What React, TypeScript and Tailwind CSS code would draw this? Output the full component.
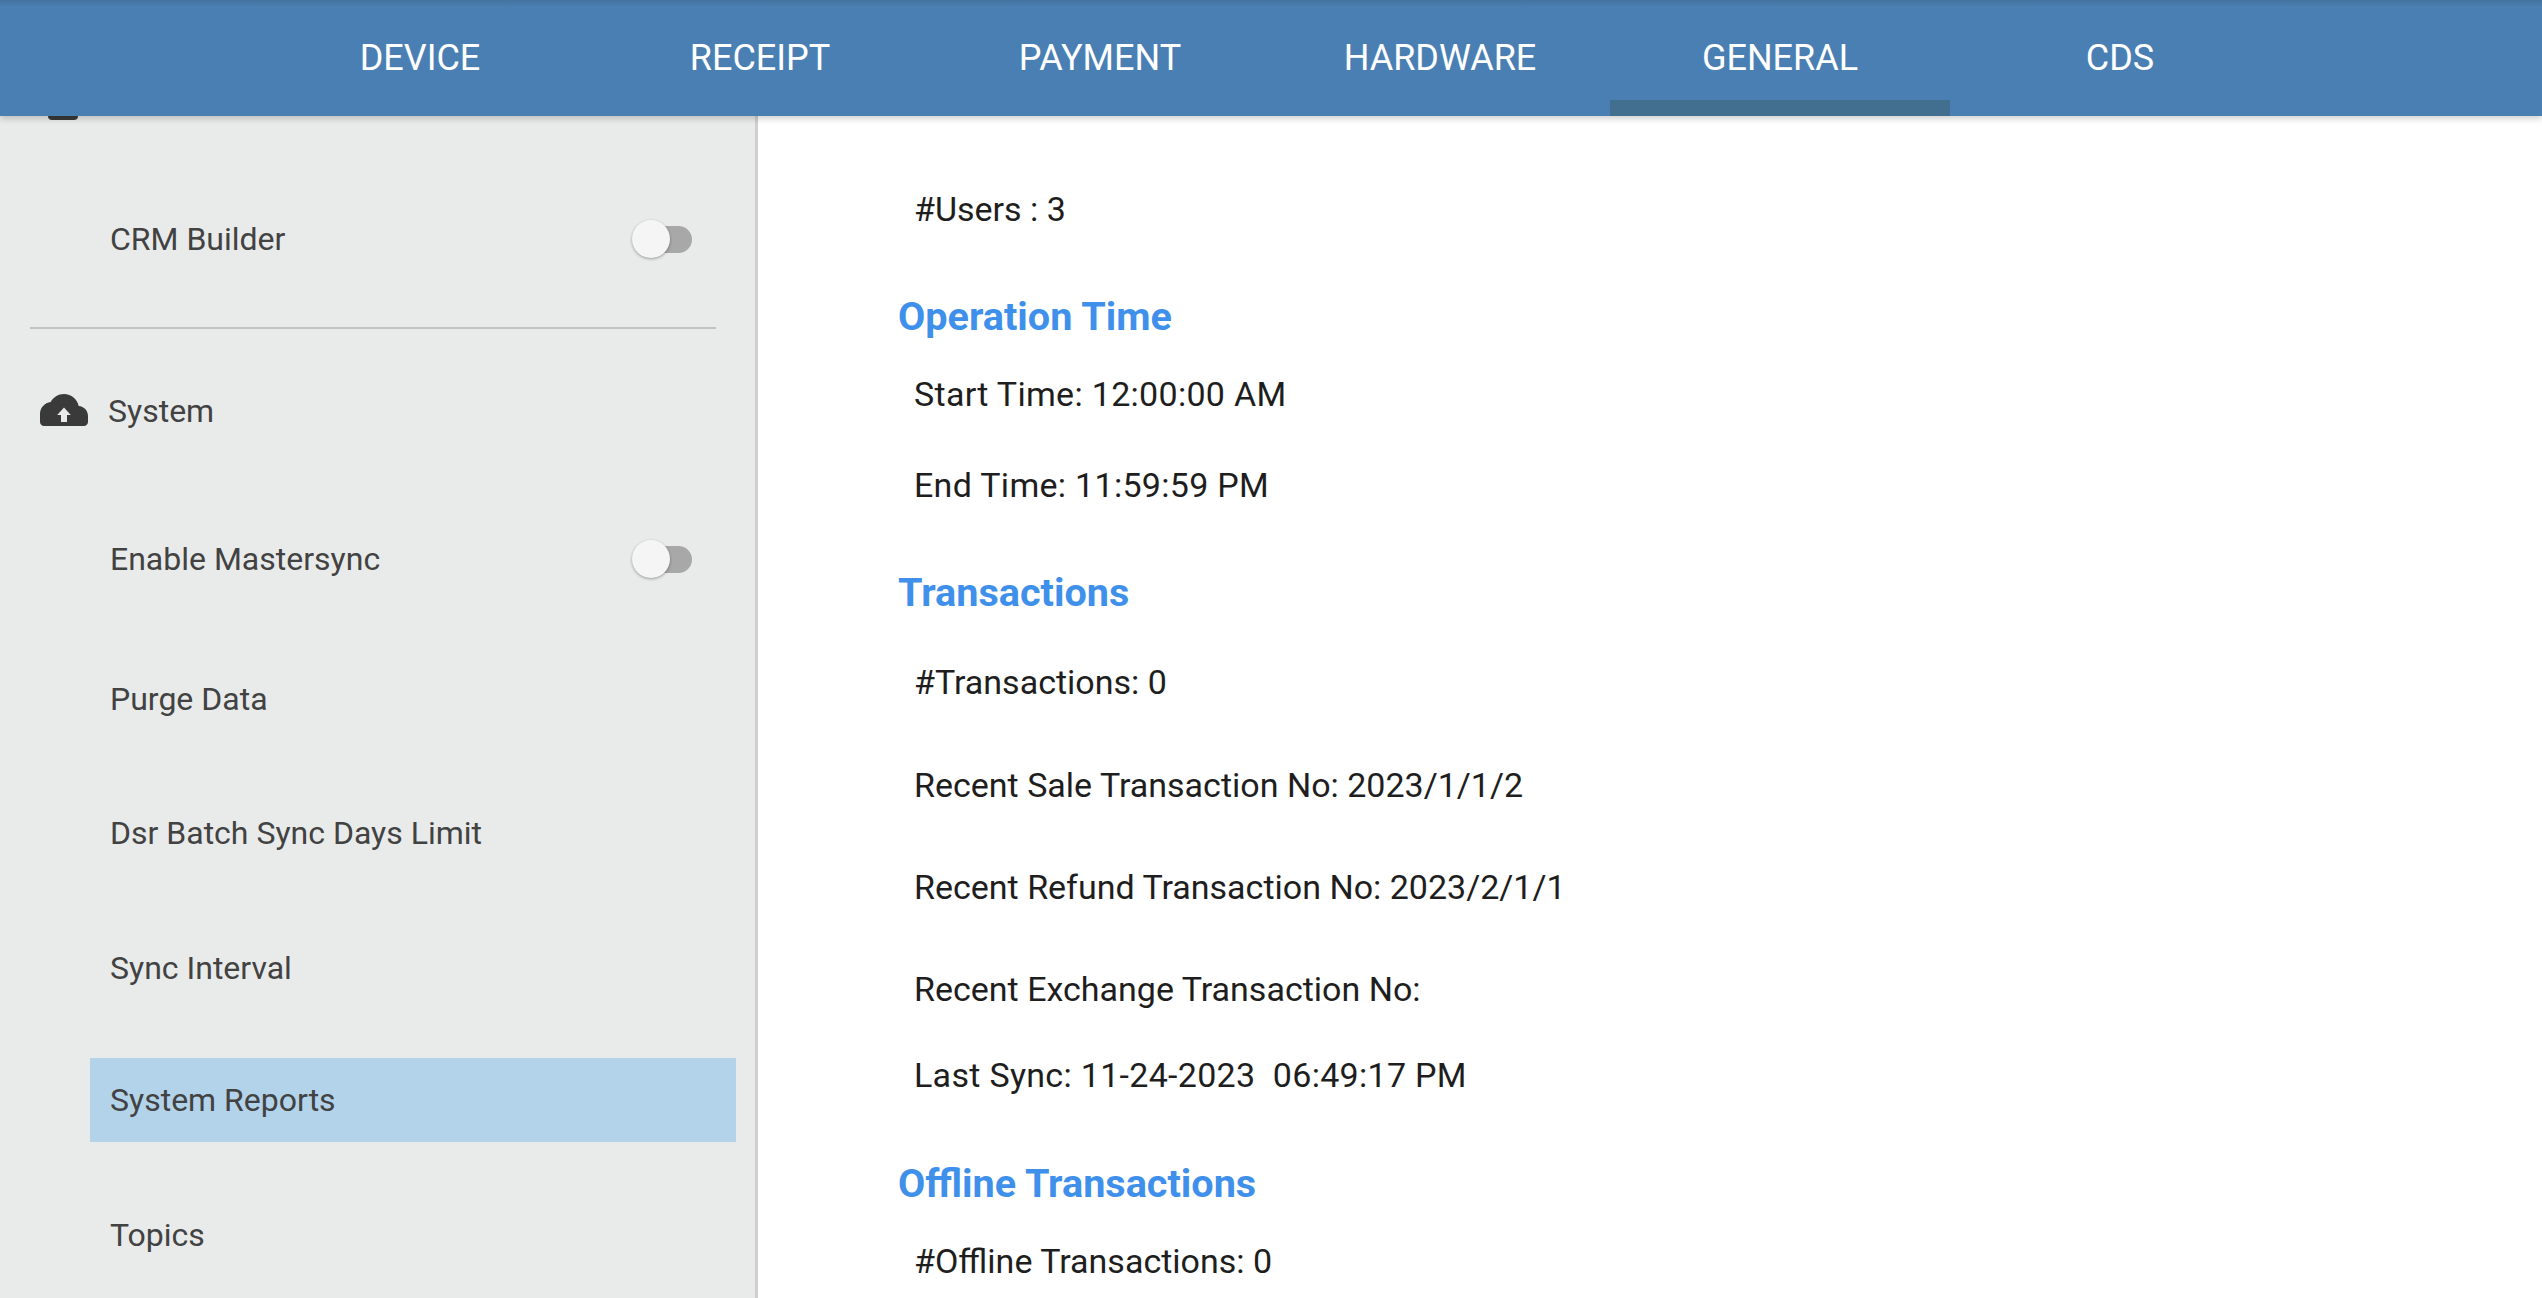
const tabs = ['DEVICE', 'RECEIPT', 'PAYMENT', 'HARDWARE', 'GENERAL', 'CDS']

function Toggle() {
  return (
    <div className="flex items-center w-[60px] h-[40px] relative">
      <div className="ml-[14px] w-[46px] h-[27px] rounded-full bg-[#a8a8a8]" />
      <div className="absolute left-0 top-px w-[38px] h-[38px] rounded-full bg-[#f5f5f5] shadow-[0_1px_3px_rgba(0,0,0,0.35)]" />
    </div>
  )
}

function CloudIcon() {
  return (
    <svg width="48" height="48" viewBox="0 0 24 24" className="fill-[#3a3a3a]">
      <path
        fillRule="evenodd"
        d="M19.35 10.04C18.67 6.59 15.64 4 12 4 9.11 4 6.6 5.64 5.35 8.04 2.34 8.36 0 10.91 0 14v4c0 1.1.9 2 2 2h20c1.1 0 2-.9 2-2v-3c0-2.64-2.05-4.78-4.65-4.96zM13.5 18v-3.5H15.4L12 10.8l-3.4 3.7h1.9V18z"
      />
    </svg>
  )
}

function NavItem({ label, mt, toggle, active }: { label: string; mt: string; toggle?: boolean; active?: boolean }) {
  return (
    <div className={`${mt} ml-[90px] w-[646px] h-[84px] pl-[20px] pr-[44px] flex items-center justify-between text-[32px] ${active ? 'bg-[#b3d3eb]' : ''}`}>
      <span>{label}</span>
      {toggle && <Toggle />}
    </div>
  )
}

function Heading({ children, mt }: { children: string; mt: string }) {
  return <div className={`${mt} h-[44px] leading-[44px] text-[39.6px] font-bold text-[#3f90ea]`}>{children}</div>
}

function Row({ children, mt, wide }: { children: string; mt: string; wide?: boolean }) {
  return (
    <div className={`${mt} ml-[16px] h-[44px] leading-[44px] text-[34px] text-[#1e1e1e] whitespace-pre ${wide ? 'tracking-[0.3px]' : ''}`}>
      {children}
    </div>
  )
}

export default function App() {
  return (
    <div className="w-[2542px] h-[1298px] overflow-hidden flex flex-col bg-white font-['Roboto',sans-serif]">
      {/* tab bar */}
      <div className="relative z-10 h-[116px] shrink-0 flex justify-center pr-[2px] bg-gradient-to-b from-[#44739f] from-0% to-[#4a7fb3] to-[6%] shadow-[0_3px_6px_rgba(0,0,0,0.18)]">
        {tabs.map((t) => (
          <div
            key={t}
            className={`w-[340px] h-full flex items-center justify-center text-[36px] text-white ${t === 'GENERAL' ? 'border-b-[16px] border-[#426f8f] pt-[16px]' : ''}`}
          >
            {t}
          </div>
        ))}
      </div>

      <div className="flex flex-1 min-h-0">
        {/* settings list */}
        <div className="w-[758px] shrink-0 overflow-hidden bg-[#e9ebea] border-r-[3px] border-[#cfcfcf] text-[#424242]">
          <div className="ml-[48px] w-[30px] h-[4px] rounded-b-[4px] bg-[#3a3a3a]" />
          <NavItem label="CRM Builder" mt="mt-[77px]" toggle />
          <div className="mt-[46px] ml-[30px] w-[686px] h-[2px] bg-[#c2c2c2]" />
          <div className="mt-[57px] ml-[40px] h-[48px] flex items-center gap-[20px] text-[32px]">
            <CloudIcon />
            <span className="mt-[2px]">System</span>
          </div>
          <NavItem label="Enable Mastersync" mt="mt-[83px]" toggle />
          <NavItem label="Purge Data" mt="mt-[56px]" />
          <NavItem label="Dsr Batch Sync Days Limit" mt="mt-[50px]" />
          <NavItem label="Sync Interval" mt="mt-[51px]" />
          <NavItem label="System Reports" mt="mt-[48px]" active />
          <NavItem label="Topics" mt="mt-[51px]" />
        </div>

        {/* details */}
        <div className="flex-1 pt-[71px] pl-[140px]">
          <Row mt="mt-0">#Users : 3</Row>
          <Heading mt="mt-[64px]">Operation Time</Heading>
          <Row mt="mt-[33px]" wide>Start Time: 12:00:00 AM</Row>
          <Row mt="mt-[47px]" wide>End Time: 11:59:59 PM</Row>
          <Heading mt="mt-[64px]">Transactions</Heading>
          <Row mt="mt-[45px]">#Transactions: 0</Row>
          <Row mt="mt-[59px]">Recent Sale Transaction No: 2023/1/1/2</Row>
          <Row mt="mt-[58px]">Recent Refund Transaction No: 2023/2/1/1</Row>
          <Row mt="mt-[58px]">Recent Exchange Transaction No:</Row>
          <Row mt="mt-[42px]" wide>Last Sync: 11-24-2023  06:49:17 PM</Row>
          <Heading mt="mt-[65px]">Offline Transactions</Heading>
          <Row mt="mt-[33px]">#Offline Transactions: 0</Row>
        </div>
      </div>
    </div>
  )
}
